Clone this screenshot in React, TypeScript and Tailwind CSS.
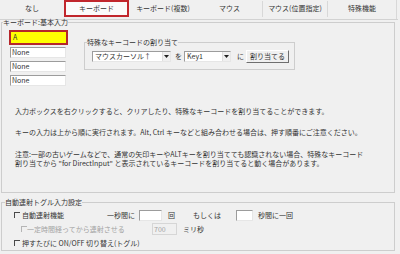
import React from "react";

const sunken =
	"bg-white border border-t-[#9c9c9c] border-l-[#9c9c9c] border-b-[#e6e6e6] border-r-[#e6e6e6]";

function TabBar() {
	return (
		<div className="flex h-[20px] w-[398px] border-b border-[#d2d2d2]">
			<div className="w-[64px] flex justify-center pt-[4px]">なし</div>
			<div className="w-[65px] h-[17px] flex justify-center pt-[2px] border-2 border-[#c1272d] bg-[#fbfbfb]">
				キーボード
			</div>
			<div className="w-[68px] flex justify-center pt-[4px]">キーボード(複数)</div>
			<div className="w-[65px] flex justify-center pt-[4px]">マウス</div>
			<div className="w-[66px] h-[16px] mt-[1px] flex justify-center pt-[3px] border-x border-[#d8d8d8]">
				マウス(位置指定)
			</div>
			<div className="w-[69px] h-[19px] flex justify-center pt-[4px] border-r border-[#d8d8d8]">
				特殊機能
			</div>
		</div>
	);
}

function Select({ w, value }: { w: string; value: string }) {
	return (
		<div className={"flex h-[11px] items-stretch " + w + " " + sunken}>
			<span className="flex-1 pl-[2px] leading-[9px] whitespace-nowrap overflow-hidden">
				{value}
			</span>
			<span className="w-[8px] flex items-center justify-center bg-[#f0f0f0] border-l border-[#e0e0e0]">
				<svg width="5" height="3" viewBox="0 0 5 3">
					<path d="M0 0H5L2.5 3Z" fill="#222" />
				</svg>
			</span>
		</div>
	);
}

function Check({ disabled }: { disabled?: boolean }) {
	return (
		<span
			className={
				"inline-block w-[6px] h-[6px] shrink-0 border-t border-l " +
				(disabled ? "border-[#b5b5b5]" : "border-[#4a4a4a]")
			}
		/>
	);
}

export default function App() {
	return (
		<div className="w-[400px] h-[254px] overflow-hidden bg-[#f0f0f0] text-[#333] text-[7px] leading-[9px] font-['Noto_Sans_CJK_JP','Noto_Sans',sans-serif]">
			<TabBar />

			{/* キーボード:基本入力 */}
			<fieldset className="ml-[1px] -mt-[1px] w-[394px] h-[174px] border border-[#cdcdcd]">
				<legend className="ml-[1px] leading-[7px]">キーボード:基本入力</legend>
				<div className="flex">
					<div className="flex flex-col ml-[7px] mt-[4px]">
						<div className="w-[59px] h-[15px] border-2 border-[#b5262b] bg-[#ffff00] pl-[2px] leading-[11px]">
							A
						</div>
						<div className={"w-[56px] h-[11px] mt-[2px] ml-[1px] pl-[1px] leading-[9px] " + sunken}>
							None
						</div>
						<div className={"w-[56px] h-[11px] mt-[3px] ml-[1px] pl-[1px] leading-[9px] " + sunken}>
							None
						</div>
						<div className={"w-[56px] h-[11px] mt-[3px] ml-[1px] pl-[1px] leading-[9px] " + sunken}>
							None
						</div>
					</div>

					<fieldset className="ml-[16px] mt-[13px] w-[211px] h-[31px] border border-[#cdcdcd]">
						<legend className="ml-[2px] leading-[7px]">特殊なキーコードの割り当て</legend>
						<div className="flex items-center h-[13px] mt-[4px] ml-[7px]">
							<Select w="w-[79px]" value="マウスカーソル↑" />
							<span className="ml-[4px] w-[9px]">を</span>
							<Select w="w-[47px]" value="Key1" />
							<span className="ml-[6px] w-[9px]">に</span>
							<button className="h-[13px] w-[43px] bg-[#f0f0f0] border border-t-white border-l-white border-b-[#6f6f6f] border-r-[#6f6f6f] leading-[9px] text-[#333] font-['Noto_Sans_CJK_JP',sans-serif]">
								割り当てる
							</button>
						</div>
					</fieldset>
				</div>

				<div className="ml-[13px] mt-[21px] whitespace-nowrap">
					<p>入力ボックスを右クリックすると、クリアしたり、特殊なキーコードを割り当てることができます。</p>
					<p className="mt-[12px]">
						キーの入力は上から順に実行されます。Alt, Ctrl キーなどと組み合わせる場合は、押す順番にご注意ください。
					</p>
					<p className="mt-[13px]">
						注意:一部の古いゲームなどで、通常の矢印キーやALTキーを割り当てても認識されない場合、特殊なキーコード
						<br />
						割り当てから "for DirectInput" と表示されているキーコードを割り当てると動く場合があります。
					</p>
				</div>
			</fieldset>

			{/* 自動連射トグル入力設定 */}
			<fieldset className="ml-[1px] mt-[6px] w-[394px] h-[52px] border border-[#cdcdcd]">
				<legend className="ml-[3px] leading-[7px]">自動連射トグル入力設定</legend>
				<div className="mt-[2px] whitespace-nowrap">
					<div className="flex items-center h-[14px]">
						<span className="ml-[12px]"><Check /></span>
						<span className="ml-[2px] w-[85px]">自動連射機能</span>
						<span className="w-[32px]">一秒間に</span>
						<span className={"w-[23px] h-[11px] " + sunken} />
						<span className="ml-[6px] w-[25px]">回</span>
						<span className="w-[43px]">もしくは</span>
						<span className={"w-[17px] h-[11px] " + sunken} />
						<span className="ml-[5px]">秒間に一回</span>
					</div>
					<div className="flex items-center h-[14px]">
						<span className="ml-[19px]"><Check disabled /></span>
						<span className="w-[125px] text-[#a3a3a3]">一定時間経ってから連射させる</span>
						<span className="w-[25px] h-[12px] pl-[1px] leading-[10px] bg-[#f0f0f0] border border-[#d6d6d6] text-[#a3a3a3]">
							700
						</span>
						<span className="ml-[6px]">ミリ秒</span>
					</div>
					<div className="flex items-center h-[14px]">
						<span className="ml-[12px]"><Check /></span>
						<span className="ml-[2px]">押すたびに ON/OFF 切り替え(トグル)</span>
					</div>
				</div>
			</fieldset>
		</div>
	);
}
